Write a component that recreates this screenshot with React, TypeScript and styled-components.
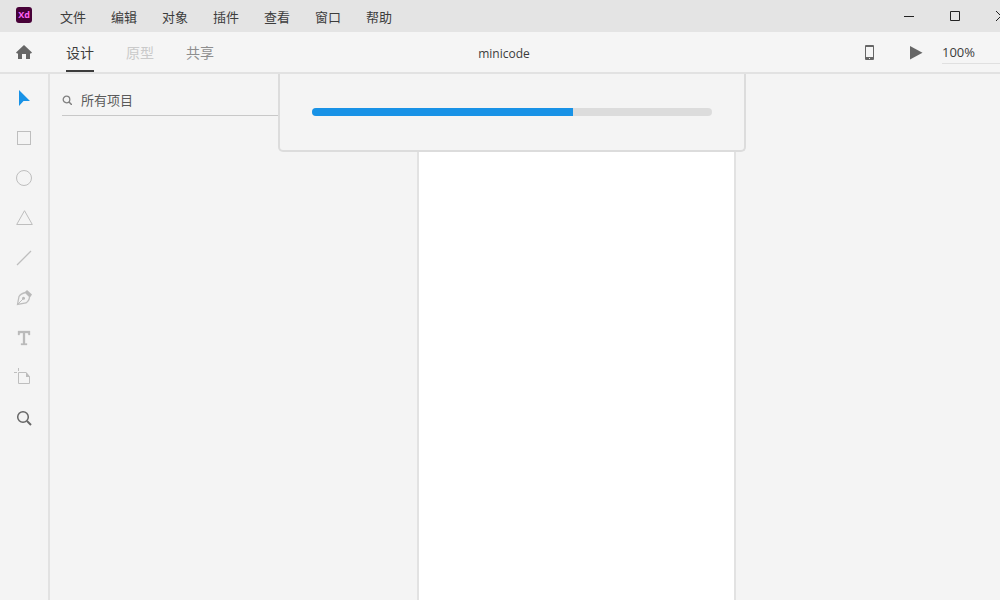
import React from "react";
import styled, { createGlobalStyle } from "styled-components";

const GlobalStyle = createGlobalStyle`
  * { box-sizing: border-box; }
  body {
    margin: 0;
    overflow: hidden;
    background: #f4f4f4;
    font-family: "Open Sans", "Noto Sans CJK SC", sans-serif;
    font-size: 13px;
    line-height: 20px;
    color: #3c3c3c;
  }
  button, input { font: inherit; color: inherit; }
  svg { display: block; flex: none; }
`;

/* The window reaches a little past the right edge of the view. */
const Window = styled.div`
  display: flex;
  flex-direction: column;
  width: calc(100% + 24px);
  min-height: 100vh;
`;

const PlainButton = styled.button`
  display: flex;
  align-items: center;
  justify-content: center;
  padding: 0;
  border: 0;
  background: none;
`;

const TitleBar = styled.header`
  display: flex;
  align-items: center;
  height: 32px;
  padding-left: 15px;
  background: #e4e4e4;
`;

const Menu = styled.nav`
  display: flex;
  gap: 25px;
  margin-left: 27px;
`;

const MenuButton = styled(PlainButton)`
  height: 32px;
  padding-top: 1px;
  white-space: nowrap;
  font-family: "Noto Sans CJK SC", sans-serif;
`;

const WindowControls = styled.div`
  display: flex;
  margin-left: auto;
`;

const WindowButton = styled(PlainButton)`
  width: 46px;
  height: 32px;
`;

const Toolbar = styled.div`
  display: grid;
  grid-template-columns: 1fr auto 1fr;
  height: 42px;
  border-bottom: 2px solid #e2e2e2;
  background: #f5f5f5;
`;

const ToolbarStart = styled.div`
  display: flex;
  align-items: stretch;
`;

const HomeButton = styled(PlainButton)`
  width: 48px;
`;

const Tabs = styled.nav`
  display: flex;
  gap: 32px;
  margin-left: 18px;
`;

const Tab = styled.button<{ $tone: string; $active?: boolean }>`
  padding: 2px 0 0;
  border: 0;
  border-bottom: 2px solid ${(p) => (p.$active ? "#3c3c3c" : "transparent")};
  background: none;
  font-family: "Noto Sans CJK SC", sans-serif;
  font-size: 14px;
  white-space: nowrap;
  && { color: ${(p) => p.$tone}; }
`;

const DocumentTitle = styled.h1`
  align-self: center;
  margin: 4px 16px 0 0;
  font-size: 12px;
  font-weight: 400;
`;

const ToolbarEnd = styled.div`
  display: flex;
  align-items: center;
  justify-content: flex-end;
`;

const ActionButton = styled(PlainButton)`
  width: 46px;
  height: 40px;
  padding-top: 1px;
`;

const ZoomInput = styled.input`
  width: 82px;
  height: 24px;
  margin-left: 3px;
  padding: 0;
  border: 0;
  border-bottom: 1px solid #e0e0e0;
  border-radius: 0;
  background: none;
  outline: none;
`;

const Workspace = styled.div`
  position: relative;
  display: flex;
  flex: 1;
`;

const ToolRail = styled.aside`
  display: flex;
  flex-direction: column;
  width: 50px;
  padding-top: 4px;
  border-right: 2px solid #e2e2e2;
`;

const ToolButton = styled(PlainButton)`
  width: 48px;
  height: 40px;
`;

const LayersPanel = styled.section`
  width: 240px;
  padding: 12px 0 0 12px;
`;

const SearchField = styled.label`
  display: flex;
  align-items: center;
  gap: 9px;
  height: 30px;
  padding-bottom: 2px;
  border-bottom: 1px solid #c8c8c8;
`;

const SearchInput = styled.input`
  flex: 1;
  min-width: 0;
  height: 24px;
  padding: 0;
  border: 0;
  background: none;
  outline: none;
  color: #5a5a5a;
  font-family: "Noto Sans CJK SC", sans-serif;
  &::placeholder { color: #5a5a5a; opacity: 1; }
`;

const Canvas = styled.main`
  display: flex;
  flex: 1;
  padding-left: 127px;
`;

const Artboard = styled.div`
  width: 319px;
  border: solid #e2e2e2;
  border-width: 0 2px;
  background: #fff;
`;

const ProgressDialog = styled.div`
  position: absolute;
  top: 0;
  left: 50%;
  width: 468px;
  padding: 34px 32px;
  transform: translateX(-50%);
  border: 2px solid #dcdcdc;
  border-top: 0;
  border-radius: 0 0 5px 5px;
  background: #f4f4f4;
`;

const Track = styled.div`
  height: 8px;
  overflow: hidden;
  border-radius: 4px;
  background: #dcdcdc;
`;

const Fill = styled.div`
  height: 100%;
  background: #1892e6;
`;

const LogoText = styled.text`
  font-family: "Open Sans", sans-serif;
  font-size: 9px;
  font-weight: 700;
  fill: #ff61f6;
`;

const menus = ["文件", "编辑", "对象", "插件", "查看", "窗口", "帮助"];

const tools = [
  { name: "选择", icon: <path d="M19 12v16l4.500-5H30z" fill="#1892e6" /> },
  { name: "矩形", icon: <rect x="17.5" y="13.5" width="13" height="13" /> },
  { name: "椭圆", icon: <circle cx="24" cy="20" r="7.5" /> },
  { name: "多边形", icon: <path d="M24.5 12.700 32.300 26.500H16.700z" /> },
  { name: "直线", icon: <path d="M17 27 31 13" strokeWidth="1.300" /> },
  {
    name: "钢笔",
    icon: (
      <>
        <path d="M17.500 26.500 19 18.500Q20.500 15.800 25.500 14.500L29.500 18.500Q29.500 22.500 26 25z" strokeWidth="1.300" />
        <path d="M17.500 26.500 23 21" />
        <circle cx="23.500" cy="20.300" r="1.500" fill="#b9b9b9" stroke="none" />
        <path d="M25 14 27 12 32 16.500 30 19.500z" fill="#b9b9b9" stroke="none" />
      </>
    ),
  },
  {
    name: "文本",
    icon: <path d="M18 13h12v4h-1.500l-.5-2h-3v10.500h2V27h-6v-1.500h2V15h-3l-.5 2H18z" fill="#bababa" stroke="#bababa" strokeWidth=".3" />,
  },
  {
    name: "画板",
    icon: (
      <>
        <path d="M18.500 14.500v11h11V18.500L26 14.500z" />
        <path d="M26 14v5h4z" fill="#bcbcbc" stroke="none" />
        <path d="M18.500 10v3M14 14.500h3" />
      </>
    ),
  },
  {
    name: "缩放",
    icon: (
      <g stroke="#666" fill="none">
        <circle cx="23" cy="19" r="5.300" strokeWidth="1.500" />
        <path d="m27 23 4 4" strokeWidth="2" />
      </g>
    ),
  },
];

export default function App() {
  return (
    <>
      <GlobalStyle />
      <Window>
        <TitleBar>
          <svg width="18" height="18" viewBox="0 0 18 18" role="img" aria-label="Xd">
            <rect x="1" y="0" width="16" height="16" rx="3" fill="#470137" />
            <LogoText x="9" y="11" textAnchor="middle">Xd</LogoText>
          </svg>
          <Menu>
            {menus.map((label) => (
              <MenuButton key={label}>{label}</MenuButton>
            ))}
          </Menu>
          <WindowControls>
            <WindowButton aria-label="最小化">
              <svg width="10" height="10" stroke="#222"><path d="M0 5.500h10" /></svg>
            </WindowButton>
            <WindowButton aria-label="最大化">
              <svg width="10" height="10" fill="none" stroke="#222"><path d="M.5.500h9v9h-9z" /></svg>
            </WindowButton>
            <WindowButton aria-label="关闭">
              <svg width="12" height="12" stroke="#222"><path d="m1 1 10 10M11 1 1 11" /></svg>
            </WindowButton>
          </WindowControls>
        </TitleBar>

        <Toolbar>
          <ToolbarStart>
            <HomeButton aria-label="主页">
              <svg width="16" height="16" viewBox="0 0 16 16" fill="#666">
                <path d="M8 1 16 8.500 15 9.500H14V15H10V10H6v5H2V9.500H1L0 8.500z" />
              </svg>
            </HomeButton>
            <Tabs>
              <Tab $tone="#3c3c3c" $active>设计</Tab>
              <Tab $tone="#cacaca">原型</Tab>
              <Tab $tone="#8e8e8e">共享</Tab>
            </Tabs>
          </ToolbarStart>
          <DocumentTitle>minicode</DocumentTitle>
          <ToolbarEnd>
            <ActionButton aria-label="设备预览">
              <svg width="10" height="16" viewBox="0 0 10 16">
                <path fillRule="evenodd" fill="#666" d="M1 0h7q1 0 1 1v13q0 1-1 1H1q-1 0-1-1V1q0-1 1-1zM1 2v10h7V2zM4 13h1v1H4z" />
              </svg>
            </ActionButton>
            <ActionButton aria-label="播放">
              <svg width="14" height="14"><path d="M1 0v13.500l12.500-6.700z" fill="#666" /></svg>
            </ActionButton>
            <ZoomInput aria-label="缩放比例" defaultValue="100%" />
          </ToolbarEnd>
        </Toolbar>

        <Workspace>
          <ToolRail>
            {tools.map((tool) => (
              <ToolButton key={tool.name} aria-label={tool.name}>
                <svg width="48" height="40" fill="none" stroke={tool.name === "选择" ? "none" : "#bebebe"}>
                  {tool.icon}
                </svg>
              </ToolButton>
            ))}
          </ToolRail>
          <LayersPanel>
            <SearchField>
              <svg width="10" height="10" fill="none" stroke="#808080">
                <circle cx="4.500" cy="4.500" r="3.300" strokeWidth="1.300" />
                <path d="m7 7 3 3" strokeWidth="1.500" />
              </svg>
              <SearchInput aria-label="搜索项目" placeholder="所有项目" />
            </SearchField>
          </LayersPanel>
          <Canvas>
            <Artboard />
          </Canvas>
          <ProgressDialog>
            <Track role="progressbar" aria-label="进度" aria-valuenow={65} aria-valuemin={0} aria-valuemax={100}>
              <Fill style={{ width: "65.2%" }} />
            </Track>
          </ProgressDialog>
        </Workspace>
      </Window>
    </>
  );
}
